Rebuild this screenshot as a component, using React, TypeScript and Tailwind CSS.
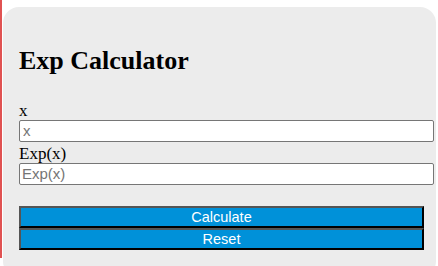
export default function App() {
  return (
    <div className="flex h-[266px] w-[438px] overflow-hidden bg-white">
      <div className="h-[258px] w-[2px] shrink-0 bg-[#e05252]" />
      <div className="ml-px mr-[2px] mt-[7px] h-[270px] flex-1 rounded-2xl bg-[#ececec] pl-[16px] pr-[2px] pt-[40px]">
        <h2 className="font-['Liberation_Serif',serif] text-[26px] font-bold leading-[28px] text-black">
          Exp Calculator
        </h2>
        <form className="mt-[27px] flex flex-col" onSubmit={(e) => e.preventDefault()}>
          <label className="font-['Liberation_Serif',serif] text-[17px] leading-[18px] text-black">x</label>
          <input
            placeholder="x"
            className="h-[22px] w-full rounded-[2px] border border-[#767676] bg-white px-[3px] font-['Liberation_Sans',sans-serif] text-[15px] placeholder:text-[#757575]"
          />
          <label className="mt-[3px] font-['Liberation_Serif',serif] text-[17px] leading-[18px] text-black">Exp(x)</label>
          <input
            placeholder="Exp(x)"
            className="h-[22px] w-full rounded-[2px] border border-[#767676] bg-white px-[2px] font-['Liberation_Sans',sans-serif] text-[15px] placeholder:text-[#757575]"
          />
          <div className="mt-[21px] mr-[10px] flex flex-col">
            <button
              type="submit"
              className="h-[22px] border-2 border-t-[#555] border-l-[#555] border-r-black border-b-black bg-[#0091d9] font-['Liberation_Sans',sans-serif] text-[14.5px] leading-none text-white"
            >
              Calculate
            </button>
            <button
              type="reset"
              className="h-[22px] border-2 border-t-[#555] border-l-[#555] border-r-black border-b-black bg-[#0091d9] font-['Liberation_Sans',sans-serif] text-[14.5px] leading-none text-white"
            >
              Reset
            </button>
          </div>
        </form>
      </div>
    </div>
  )
}
